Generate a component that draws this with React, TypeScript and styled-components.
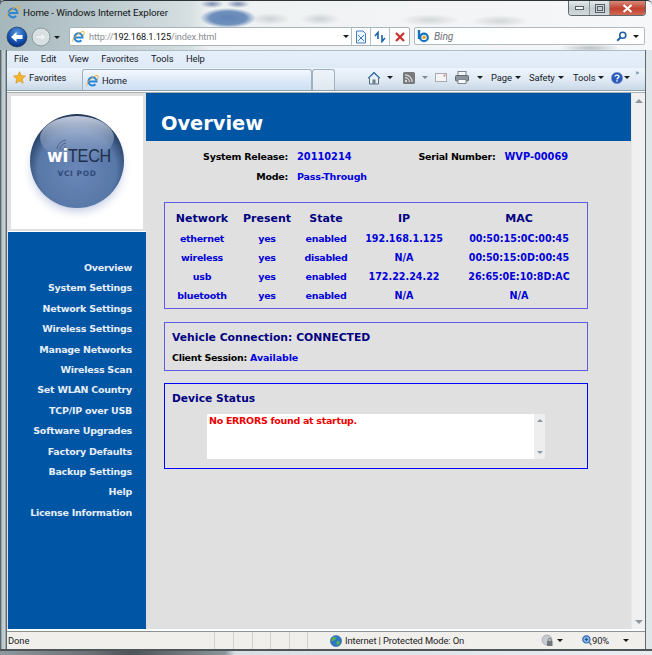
import React from 'react';
import styled, { createGlobalStyle } from 'styled-components';

const GlobalStyle = createGlobalStyle`
  html, body {
    margin: 0;
    padding: 0;
    background: #e8edf0;
  }
  * {
    box-sizing: border-box;
  }
`;

const uiFont = `Roboto, 'Noto Sans', sans-serif`;
const pageFont = `'DejaVu Sans', Verdana, sans-serif`;

const Window = styled.div`
  width: 652px;
  height: 655px;
  display: flex;
  flex-direction: column;
  overflow: hidden;
  font-family: ${uiFont};
  letter-spacing: -0.1px;
  background: linear-gradient(90deg, #39464a 0, #b9c7cc 2px, #c6d2d6 5px, #6b7a80 6px, #6b7a80 7px, #dfe6ea 8px);
`;

const Glass = styled.div`
  height: 50px;
  flex: none;
  border-top: 1px solid #2c3436;
  border-radius: 5px 5px 0 0;
  background:
    radial-gradient(ellipse 28px 10px at 228px 17px, #5f84b6 0, #6f90bc 65%, rgba(120, 150, 190, 0) 100%),
    radial-gradient(ellipse 12px 4px at 212px 3px, #7c8cb0 0, rgba(160, 170, 190, 0) 100%),
    radial-gradient(ellipse 12px 4px at 238px 3px, #7c8cb0 0, rgba(160, 170, 190, 0) 100%),
    radial-gradient(ellipse 20px 6px at 270px 18px, #cdd3d6 0, rgba(205, 211, 214, 0) 100%),
    radial-gradient(ellipse 20px 6px at 320px 18px, #cdd3d6 0, rgba(205, 211, 214, 0) 100%),
    radial-gradient(ellipse 30px 6px at 430px 19px, #d4d7d9 0, rgba(212, 215, 217, 0) 100%),
    radial-gradient(ellipse 30px 6px at 500px 20px, #d4d7d9 0, rgba(212, 215, 217, 0) 100%),
    radial-gradient(ellipse 30px 4px at 590px 47px, #b9bfc3 0, rgba(185, 191, 195, 0) 100%),
    linear-gradient(90deg, #a5b7bb 0, #b9c8cc 90px, #d6dfe2 190px, #eef1f2 210px, #f6f7f8 100%);
`;

const TitleBar = styled.div`
  height: 25px;
  display: flex;
  align-items: flex-start;
  padding-left: 6px;
`;

const TitleLabel = styled.div`
  display: flex;
  align-items: center;
  gap: 3px;
  height: 22px;
  font-size: 9.8px;
  color: #101416;
`;

const WindowControls = styled.div`
  margin-left: auto;
  margin-right: 6px;
  display: flex;
  height: 15px;
  width: 78px;
  border: 1px solid #5f686c;
  border-top: none;
  border-radius: 0 0 4px 4px;
  overflow: hidden;
`;

const ControlButton = styled.div<{ $w: number; $close?: boolean }>`
  width: ${(p) => p.$w}px;
  display: flex;
  align-items: center;
  justify-content: center;
  background: ${(p) =>
    p.$close
      ? 'linear-gradient(180deg, #d98a7c 0, #c2402e 55%, #cf6a55 100%)'
      : 'linear-gradient(180deg, #e4e8ea 0, #c4cccf 55%, #d3d9dc 100%)'};
  border-right: ${(p) => (p.$close ? 'none' : '1px solid #8a9498')};
`;

const NavRow = styled.div`
  height: 24px;
  display: flex;
  align-items: flex-start;
  padding-left: 6px;
`;

const NavButtons = styled.div`
  width: 63px;
  height: 22px;
  display: flex;
  align-items: center;
  gap: 3px;
`;

const AddressBox = styled.div`
  width: 341px;
  height: 19px;
  margin-top: 1px;
  display: flex;
  align-items: center;
  background: #fff;
  border: 1px solid #a9b4ba;
  border-radius: 2px;
  padding-left: 2px;
  font-size: 9.2px;
`;

const UrlText = styled.div`
  flex: 1;
  margin-left: 4px;
  color: #8a8f92;
  white-space: nowrap;
  b {
    color: #111;
    font-weight: 400;
  }
`;

const AddressTool = styled.div<{ $w: number; $divided?: boolean }>`
  width: ${(p) => p.$w}px;
  height: 100%;
  flex: none;
  display: flex;
  align-items: center;
  justify-content: center;
  border-left: ${(p) => (p.$divided ? '1px solid #b5c0c6' : 'none')};
`;

const SearchBox = styled.div`
  width: 231px;
  height: 18px;
  margin-top: 1px;
  margin-left: 4px;
  display: flex;
  align-items: center;
  background: rgba(255, 255, 255, 0.92);
  border: 1px solid #b0babf;
  border-radius: 2px;
  padding-left: 2px;
`;

const SearchHint = styled.div`
  flex: 1;
  margin-left: 3px;
  font-size: 10.3px;
  font-style: italic;
  color: #6e7275;
`;

const Body = styled.div`
  flex: 1;
  min-height: 0;
  margin: 0 6px 0 6px;
  display: flex;
  flex-direction: column;
  background: #fff;
  border-left: 1px solid #5c6a70;
  border-right: 1px solid #5c6a70;
`;

const MenuBar = styled.div`
  height: 18px;
  flex: none;
  display: flex;
  align-items: center;
  padding: 0 0 2px 7px;
  gap: 12.5px;
  font-size: 9.4px;
  color: #15202a;
  border-top: 1px solid #aebcc8;
  background: linear-gradient(180deg, #e6f0fa, #dfeaf7);
`;

const TabRow = styled.div`
  height: 23px;
  flex: none;
  display: flex;
  align-items: flex-end;
  font-size: 9.4px;
  color: #15202a;
  border-bottom: 1px solid #8fa0ae;
  background: linear-gradient(180deg, #eef4fb 0, #dfe9f4 55%, #c9d8e7 100%);
`;

const FavoritesButton = styled.div`
  width: 75px;
  height: 22px;
  flex: none;
  display: flex;
  align-items: center;
  padding: 0 0 3px 6px;
  gap: 3px;
`;

const Tab = styled.div<{ $w: number; $active?: boolean }>`
  width: ${(p) => p.$w}px;
  height: 21px;
  flex: none;
  display: flex;
  align-items: center;
  gap: 3px;
  padding-left: 3px;
  border: 1px solid #9fb0bf;
  border-bottom: none;
  border-radius: 3px 3px 0 0;
  background: ${(p) =>
    p.$active
      ? 'linear-gradient(180deg, #f4f8fd 0, #d9e7f8 60%, #cfe0f4 100%)'
      : 'linear-gradient(180deg, #eef3f9, #dfe8f1)'};
`;

const CommandBar = styled.div`
  display: flex;
  align-items: center;
  height: 22px;
  margin-left: 31px;
  padding-bottom: 3px;
`;

const Slot = styled.div<{ $w: number; $start?: boolean }>`
  width: ${(p) => p.$w}px;
  flex: none;
  display: flex;
  align-items: center;
  gap: 3px;
  justify-content: ${(p) => (p.$start ? 'flex-start' : 'center')};
`;

const Caret = styled.span<{ $light?: boolean }>`
  display: inline-block;
  width: 0;
  height: 0;
  border-left: 3px solid transparent;
  border-right: 3px solid transparent;
  border-top: 3px solid ${(p) => (p.$light ? '#7d8a94' : '#1a1a1a')};
`;

const Chevrons = styled.span`
  font-size: 8px;
  color: #4a6a9a;
  margin: -10px 0 0 0;
`;

const Page = styled.div`
  flex: 1;
  min-height: 0;
  margin-top: 1px;
  display: flex;
  background: #e0e0e0;
  border-top: 1px solid #a8b0b6;
  font-family: ${pageFont};
  font-weight: 700;
  font-size: 9.5px;
  letter-spacing: -0.25px;
`;

const Sidebar = styled.div`
  width: 138px;
  flex: none;
  margin-left: 1px;
  display: flex;
  flex-direction: column;
`;

const LogoArea = styled.div`
  height: 139px;
  flex: none;
  padding: 3px;
  border-bottom: 1px solid #fff;
`;

const LogoCard = styled.div`
  width: 132px;
  height: 133px;
  background: #fff;
`;

const Nav = styled.nav`
  flex: 1;
  background: #0055a5;
  padding: 26px 14px 0 0;
  display: flex;
  flex-direction: column;
  align-items: flex-end;
`;

const NavItem = styled.a`
  height: 20.4px;
  line-height: 20.4px;
  color: #e6eef7;
  white-space: nowrap;
`;

const Main = styled.main`
  flex: 1;
  min-width: 0;
`;

const Header = styled.h1`
  margin: 0;
  height: 48px;
  padding: 14px 0 0 15px;
  background: #0055a5;
  color: #fff;
  font-size: 19.4px;
  letter-spacing: 0;
  line-height: 34px;
  font-weight: 700;
`;

const Content = styled.div`
  padding: 6px 0 0 18px;
`;

const InfoGrid = styled.div`
  display: grid;
  grid-template-columns: 124px 98px 91.5px auto;
  column-gap: 9px;
  grid-auto-rows: 20px;
  line-height: 20px;
`;

const InfoLabel = styled.div`
  text-align: right;
  color: #000;
  white-space: nowrap;
`;

const InfoValue = styled.div<{ $numeric?: boolean }>`
  color: #0000e0;
  white-space: nowrap;
  letter-spacing: ${(p) => (p.$numeric ? 0 : -0.15)}px;
  font-size: ${(p) => (p.$numeric ? 9.8 : 9.5)}px;
`;

const Panel = styled.section<{ $strong?: boolean }>`
  width: 424px;
  border: 1px solid ${(p) => (p.$strong ? '#0000ff' : '#5c5ce6')};
`;

const NetworkPanel = styled(Panel)`
  margin-top: 15px;
  height: 107px;
  padding-top: 6px;
`;

const NetworkTable = styled.div`
  display: grid;
  grid-template-columns: 74px 56px 62px 94px 136px;
  grid-template-rows: 20px repeat(4, 19px);
  line-height: 19px;
  text-align: center;
  color: #0000d8;
  white-space: nowrap;
`;

const ColumnHead = styled.div`
  font-size: 11px;
  letter-spacing: 0;
  color: #000080;
`;

const Cell = styled.div<{ $numeric?: boolean }>`
  font-size: ${(p) => (p.$numeric ? 9.6 : 9.5)}px;
  letter-spacing: ${(p) => (p.$numeric ? 0 : -0.3)}px;
`;

const VehiclePanel = styled(Panel)`
  margin-top: 13px;
  height: 49px;
  padding: 5px 0 0 7px;
`;

const VehicleTitle = styled.div`
  font-size: 10.8px;
  letter-spacing: 0;
  line-height: 20px;
  color: #000080;
`;

const ClientLine = styled.div`
  line-height: 20px;
  font-size: 9.5px;
  letter-spacing: -0.3px;
  color: #000;
  span {
    letter-spacing: -0.1px;
    color: #0000e0;
  }
`;

const StatusPanel = styled(Panel)`
  margin-top: 12px;
  height: 86px;
  padding: 6px 0 0 7px;
`;

const StatusTitle = styled.div`
  font-size: 10.7px;
  letter-spacing: 0;
  line-height: 18px;
  color: #000080;
`;

const LogBox = styled.div`
  margin: 6px 0 0 35px;
  width: 338px;
  height: 45px;
  display: flex;
  background: #fff;
`;

const LogText = styled.div`
  flex: 1;
  padding-left: 2px;
  font-size: 9.5px;
  letter-spacing: -0.3px;
  line-height: 14px;
  color: #f00000;
`;

const LogScroll = styled.div`
  width: 11px;
  display: flex;
  flex-direction: column;
  justify-content: space-between;
  align-items: center;
  padding: 5px 0;
  background: #eeeeee;
`;

const ScrollTrack = styled.div`
  width: 14px;
  flex: none;
  display: flex;
  flex-direction: column;
  justify-content: space-between;
  align-items: center;
  padding: 6px 0 5px;
  background: #f0f0f0;
  border-left: 1px solid #e8e8e8;
`;

const Arrow = styled.span<{ $down?: boolean; $size: number }>`
  width: 0;
  height: 0;
  border-left: ${(p) => p.$size}px solid transparent;
  border-right: ${(p) => p.$size}px solid transparent;
  ${(p) => (p.$down ? 'border-top' : 'border-bottom')}: ${(p) => p.$size}px solid #8f979c;
`;

const WhiteGap = styled.div`
  height: 3px;
  flex: none;
  background: #fff;
  border-bottom: 1px solid #8b9297;
`;

const StatusBar = styled.footer`
  height: 17px;
  flex: none;
  display: flex;
  align-items: stretch;
  background: #f1efec;
  font-size: 9.4px;
  color: #222;
`;

const StatusCell = styled.div<{ $w: number; $divided?: boolean; $gap?: number }>`
  width: ${(p) => p.$w}px;
  flex: none;
  display: flex;
  align-items: center;
  gap: ${(p) => p.$gap ?? 3}px;
  padding-left: 1px;
  white-space: nowrap;
  border-left: ${(p) => (p.$divided ? '1px solid #d2d0cb' : 'none')};
`;

const StatusSpacer = styled.span<{ $w: number }>`
  width: ${(p) => p.$w}px;
  flex: none;
`;

const BottomEdge = styled.div`
  height: 6px;
  flex: none;
  border-top: 2px solid #4d5558;
  background: linear-gradient(90deg, #8f989c 0, #6b7073 90px, #4e5457 130px, #8b9498 225px, #d7dfe2 235px, #e8edf0 100%);
`;

const IeIcon = ({ size = 14 }: { size?: number }) => (
  <svg width={size} height={size} viewBox="0 0 16 16" fill="none">
    <path d="M3.6 9.2H13A5 5 0 1 0 11.6 12.6" stroke="#2a86d6" strokeWidth="2.4" />
    <path d="M1.2 14.5C-0.5 10.5 8 3 14 1.6C15.6 3 14.8 6 13.4 8" stroke="#f0a428" strokeWidth="1.1" />
  </svg>
);

const BackButton = () => (
  <svg width="22" height="22" viewBox="0 0 22 22">
    <defs>
      <radialGradient id="backFill" cx="50%" cy="30%" r="75%">
        <stop offset="0" stopColor="#5b9ae0" />
        <stop offset="0.6" stopColor="#124fae" />
        <stop offset="1" stopColor="#062a70" />
      </radialGradient>
    </defs>
    <circle cx="11" cy="11" r="10" fill="url(#backFill)" stroke="#1c3050" strokeWidth="0.6" />
    <path d="M5 11L10.5 6V9H16.5V13H10.5V16Z" fill="#fff" />
  </svg>
);

const ForwardButton = () => (
  <svg width="20" height="20" viewBox="0 0 20 20">
    <circle cx="10" cy="10" r="9" fill="#d9e0e3" stroke="#8c979c" />
    <path d="M15 10L10 5.5V8.5H5V11.5H10V14.5Z" fill="#eef1f2" stroke="#c4cccf" strokeWidth="0.5" />
  </svg>
);

const CompatIcon = () => (
  <svg width="12" height="14" viewBox="0 0 12 14" fill="none" stroke="#3d7fc4">
    <path d="M1.5 1H8L10.5 3.5V13H1.5Z" fill="#eef5fc" />
    <path d="M3 5L9 11M9 5L3 11" />
  </svg>
);

const RefreshIcon = () => (
  <svg width="12" height="12" viewBox="0 0 12 12" fill="none" stroke="#1d63ab" strokeWidth="1.6">
    <path d="M1 5L4 1.5V8" />
    <path d="M11 7L8 10.5V4" />
  </svg>
);

const StopIcon = () => (
  <svg width="10" height="10" viewBox="0 0 10 10" stroke="#c9302c" strokeWidth="2.2">
    <path d="M1 1L9 9M9 1L1 9" />
  </svg>
);

const BingLogo = () => (
  <svg width="14" height="14" viewBox="0 0 14 14" fill="none">
    <path d="M2 1V10" stroke="#1273c4" strokeWidth="2.4" />
    <circle cx="7" cy="8.4" r="3.8" stroke="#1273c4" strokeWidth="2.2" />
    <circle cx="7" cy="8.4" r="1.8" fill="#f4a31c" />
  </svg>
);

const MagnifierIcon = () => (
  <svg width="11" height="11" viewBox="0 0 11 11" fill="none" stroke="#1f5fa8" strokeWidth="1.6">
    <circle cx="6.8" cy="4.2" r="3" />
    <path d="M4.6 6.4L1.2 9.8" strokeWidth="2" />
  </svg>
);

const StarIcon = () => (
  <svg width="13" height="13" viewBox="0 0 13 13">
    <path d="M6.5.6L8.3 4.5L12.5 5L9.4 7.9L10.2 12.2L6.5 10.1L2.8 12.2L3.6 7.9L.5 5L4.7 4.5Z" fill="#f6b62c" stroke="#c98a16" strokeWidth="0.5" />
  </svg>
);

const HomeIcon = () => (
  <svg width="14" height="14" viewBox="0 0 14 14">
    <path d="M7 1L13 7H11.5V13H2.5V7H1Z" fill="#e8edf0" stroke="#5a7088" />
    <path d="M7 1L13 7H11.5L7 2.8L2.5 7H1Z" fill="#3c7cc4" />
    <rect x="5.5" y="8.5" width="3" height="4.5" fill="#6b7c8c" />
  </svg>
);

const FeedIcon = () => (
  <svg width="12" height="12" viewBox="0 0 12 12" fill="none">
    <rect width="12" height="12" rx="1.5" fill="#77797b" />
    <circle cx="3" cy="9" r="1.2" fill="#d8d8d8" />
    <path d="M2 5.6A4.4 4.4 0 0 1 6.4 10M2 2.8A7.2 7.2 0 0 1 9.2 10" stroke="#d8d8d8" strokeWidth="1.3" />
  </svg>
);

const MailIcon = () => (
  <svg width="12" height="9" viewBox="0 0 12 9">
    <rect x="0.5" y="0.5" width="11" height="8" fill="#f4f4f4" stroke="#a9adb1" />
    <rect x="8.5" y="1.5" width="2" height="2" fill="#d08a80" />
  </svg>
);

const PrinterIcon = () => (
  <svg width="14" height="13" viewBox="0 0 14 13">
    <rect x="3" y="0.5" width="8" height="5" fill="#f4f6f8" stroke="#7d868d" />
    <rect x="0.5" y="4.5" width="13" height="5.5" rx="1" fill="#8c959c" stroke="#5f686f" />
    <rect x="3" y="8.5" width="8" height="4" fill="#fafafa" stroke="#7d868d" />
  </svg>
);

const HelpIcon = () => (
  <svg width="12" height="12" viewBox="0 0 12 12">
    <circle cx="6" cy="6" r="5.7" fill="#2a5cc0" stroke="#7d95b8" strokeWidth="0.6" />
    <path d="M4 4.6C4 2.6 8 2.6 8 4.6C8 6 6 5.8 6 7.4" fill="none" stroke="#fff" strokeWidth="1.3" />
    <rect x="5.3" y="8.2" width="1.4" height="1.4" fill="#fff" />
  </svg>
);

const GlobeIcon = () => (
  <svg width="12" height="12" viewBox="0 0 12 12">
    <circle cx="6" cy="6" r="5.6" fill="#2f78c8" stroke="#24558f" strokeWidth="0.5" />
    <path d="M3 2.2C5 1.4 6.5 2.6 5.8 4.2C5 5.8 3 5.2 2 6.6C1 5 1.4 3 3 2.2ZM7 6.2C9 5.8 10.4 6.4 9.6 8.2C8.8 10 7.4 10.6 6.8 9.4C6.4 8.2 6 6.6 7 6.2Z" fill="#5bb04a" />
  </svg>
);

const LockGlobeIcon = () => (
  <svg width="13" height="13" viewBox="0 0 13 13">
    <circle cx="6" cy="6" r="5" fill="#c6ccd0" stroke="#8f979c" strokeWidth="0.6" />
    <rect x="6" y="7" width="5.5" height="5" rx="0.6" fill="#6f777c" />
    <path d="M7.2 7V5.6C7.2 3.9 10.2 3.9 10.2 5.6V7" fill="none" stroke="#6f777c" />
  </svg>
);

const ZoomIcon = () => (
  <svg width="10" height="11" viewBox="0 0 10 11" fill="none">
    <circle cx="4.4" cy="4.4" r="3.6" fill="#8cb6e4" stroke="#2a6bb5" strokeWidth="1.2" />
    <path d="M2.8 4.4H6M4.4 2.8V6" stroke="#1d4f8e" />
    <path d="M7 7L9.4 10" stroke="#6d7a85" strokeWidth="1.5" />
  </svg>
);

const WitechLogo = () => (
  <svg width="132" height="133" viewBox="0 0 132 133">
    <defs>
      <radialGradient id="orb" cx="50%" cy="60%" r="58%">
        <stop offset="0" stopColor="#6a87b8" />
        <stop offset="0.72" stopColor="#5878a8" />
        <stop offset="0.92" stopColor="#2f4a72" />
        <stop offset="1" stopColor="#223a5c" />
      </radialGradient>
      <linearGradient id="sheen" x1="0" y1="0" x2="0" y2="1">
        <stop offset="0" stopColor="#d5dcea" stopOpacity="0.9" />
        <stop offset="1" stopColor="#8aa0c6" stopOpacity="0.1" />
      </linearGradient>
      <radialGradient id="orbShadow" cx="50%" cy="50%" r="50%">
        <stop offset="0.7" stopColor="#8f9fca" stopOpacity="0.6" />
        <stop offset="1" stopColor="#ffffff" stopOpacity="0" />
      </radialGradient>
    </defs>
    <ellipse cx="66" cy="72" rx="56" ry="54" fill="url(#orbShadow)" />
    <circle cx="66" cy="65" r="47" fill="url(#orb)" />
    <ellipse cx="66" cy="42" rx="37" ry="22" fill="url(#sheen)" />
    <g fill="none" stroke="#4d5f7e" strokeWidth="0.9">
      <path d="M49 54A7 7 0 0 1 55 47" />
      <path d="M52 55A4 4 0 0 1 55 50.5" />
      <path d="M46 53A10 10 0 0 1 55 44" />
    </g>
    <text x="36" y="66" fontFamily="'DejaVu Sans', sans-serif" fontWeight="700" fontSize="17" fill="#fff" textLength="21" lengthAdjust="spacingAndGlyphs">wi</text>
    <text x="57" y="66" fontFamily="'Liberation Sans', sans-serif" fontWeight="400" fontSize="17.5" fill="#1f2f4c" textLength="43" lengthAdjust="spacingAndGlyphs">TECH</text>
    <text x="66" y="80" textAnchor="middle" fontFamily="'DejaVu Sans', sans-serif" fontWeight="700" fontSize="7.5" letterSpacing="0.6" fill="#2f4a78">VCI POD</text>
  </svg>
);

const navItems = [
  'Overview',
  'System Settings',
  'Network Settings',
  'Wireless Settings',
  'Manage Networks',
  'Wireless Scan',
  'Set WLAN Country',
  'TCP/IP over USB',
  'Software Upgrades',
  'Factory Defaults',
  'Backup Settings',
  'Help',
  'License Information',
];

const networks = [
  ['ethernet', 'yes', 'enabled', '192.168.1.125', '00:50:15:0C:00:45'],
  ['wireless', 'yes', 'disabled', 'N/A', '00:50:15:0D:00:45'],
  ['usb', 'yes', 'enabled', '172.22.24.22', '26:65:0E:10:8D:AC'],
  ['bluetooth', 'yes', 'enabled', 'N/A', 'N/A'],
];

const columns = ['Network', 'Present', 'State', 'IP', 'MAC'];

const App = () => {
  return (
    <Window>
      <GlobalStyle />
      <Glass>
        <TitleBar>
          <TitleLabel>
            <IeIcon />
            Home - Windows Internet Explorer
          </TitleLabel>
          <WindowControls>
            <ControlButton $w={22}>
              <svg width="9" height="4"><rect x="0.5" y="0.5" width="8" height="3" fill="#f2f4f5" stroke="#55606a" /></svg>
            </ControlButton>
            <ControlButton $w={20}>
              <svg width="10" height="9"><rect x="0.5" y="0.5" width="9" height="8" fill="none" stroke="#55606a" /><rect x="2.5" y="2.5" width="5" height="4" fill="none" stroke="#55606a" /></svg>
            </ControlButton>
            <ControlButton $w={36} $close>
              <svg width="11" height="9" stroke="#fff" strokeWidth="2.2"><path d="M1.5 1L9.5 8M9.5 1L1.5 8" /></svg>
            </ControlButton>
          </WindowControls>
        </TitleBar>
        <NavRow>
          <NavButtons>
            <BackButton />
            <ForwardButton />
            <Caret />
          </NavButtons>
          <AddressBox>
            <IeIcon size={13} />
            <UrlText>http://<b>192.168.1.125</b>/index.html</UrlText>
            <AddressTool $w={10}><Caret /></AddressTool>
            <AddressTool $w={19} $divided><CompatIcon /></AddressTool>
            <AddressTool $w={19} $divided><RefreshIcon /></AddressTool>
            <AddressTool $w={20} $divided><StopIcon /></AddressTool>
          </AddressBox>
          <SearchBox>
            <BingLogo />
            <SearchHint>Bing</SearchHint>
            <AddressTool $w={14}><MagnifierIcon /></AddressTool>
            <AddressTool $w={16}><Caret /></AddressTool>
          </SearchBox>
        </NavRow>
      </Glass>
      <Body>
        <MenuBar>
          <span>File</span>
          <span>Edit</span>
          <span>View</span>
          <span>Favorites</span>
          <span>Tools</span>
          <span>Help</span>
        </MenuBar>
        <TabRow>
          <FavoritesButton>
            <StarIcon />
            Favorites
          </FavoritesButton>
          <Tab $w={230} $active>
            <IeIcon size={13} />
            Home
          </Tab>
          <Tab $w={23} />
          <CommandBar>
            <Slot $w={16}><HomeIcon /></Slot>
            <Slot $w={16}><Caret /></Slot>
            <Slot $w={21}><FeedIcon /></Slot>
            <Slot $w={12}><Caret $light /></Slot>
            <Slot $w={19}><MailIcon /></Slot>
            <Slot $w={24}><PrinterIcon /></Slot>
            <Slot $w={11}><Caret /></Slot>
            <Slot $w={6} />
            <Slot $w={38} $start>Page <Caret /></Slot>
            <Slot $w={44} $start>Safety <Caret /></Slot>
            <Slot $w={37} $start>Tools <Caret /></Slot>
            <Slot $w={14}><HelpIcon /></Slot>
            <Slot $w={6}><Caret /></Slot>
            <Slot $w={14}><Chevrons>»</Chevrons></Slot>
          </CommandBar>
        </TabRow>
        <Page>
          <Sidebar>
            <LogoArea>
              <LogoCard>
                <WitechLogo />
              </LogoCard>
            </LogoArea>
            <Nav>
              {navItems.map((item) => (
                <NavItem key={item}>{item}</NavItem>
              ))}
            </Nav>
          </Sidebar>
          <Main>
            <Header>Overview</Header>
            <Content>
              <InfoGrid>
                <InfoLabel>System Release:</InfoLabel>
                <InfoValue $numeric>20110214</InfoValue>
                <InfoLabel>Serial Number:</InfoLabel>
                <InfoValue $numeric>WVP-00069</InfoValue>
                <InfoLabel>Mode:</InfoLabel>
                <InfoValue>Pass-Through</InfoValue>
              </InfoGrid>
              <NetworkPanel>
                <NetworkTable>
                  {columns.map((c) => (
                    <ColumnHead key={c}>{c}</ColumnHead>
                  ))}
                  {networks.flat().map((cell, i) => (
                    <Cell key={i} $numeric={i % 5 >= 3}>{cell}</Cell>
                  ))}
                </NetworkTable>
              </NetworkPanel>
              <VehiclePanel>
                <VehicleTitle>Vehicle Connection: CONNECTED</VehicleTitle>
                <ClientLine>Client Session: <span>Available</span></ClientLine>
              </VehiclePanel>
              <StatusPanel $strong>
                <StatusTitle>Device Status</StatusTitle>
                <LogBox>
                  <LogText>No ERRORS found at startup.</LogText>
                  <LogScroll>
                    <Arrow $size={3} />
                    <Arrow $size={3} $down />
                  </LogScroll>
                </LogBox>
              </StatusPanel>
            </Content>
          </Main>
          <ScrollTrack>
            <Arrow $size={4} />
            <Arrow $size={4} $down />
          </ScrollTrack>
        </Page>
        <WhiteGap />
        <StatusBar>
          <StatusCell $w={207}>Done</StatusCell>
          <StatusCell $w={19} $divided />
          <StatusCell $w={19} $divided />
          <StatusCell $w={18} $divided />
          <StatusCell $w={19} $divided />
          <StatusCell $w={18} $divided />
          <StatusCell $w={233} $divided>
            <StatusSpacer $w={18} />
            <GlobeIcon />
            Internet | Protected Mode: On
          </StatusCell>
          <StatusCell $w={41}>
            <LockGlobeIcon />
            <Caret />
          </StatusCell>
          <StatusCell $w={52} $gap={0}>
            <ZoomIcon />
            90%
            <StatusSpacer $w={14} />
            <Caret />
          </StatusCell>
        </StatusBar>
      </Body>
      <BottomEdge />
    </Window>
  );
};

export default App;
